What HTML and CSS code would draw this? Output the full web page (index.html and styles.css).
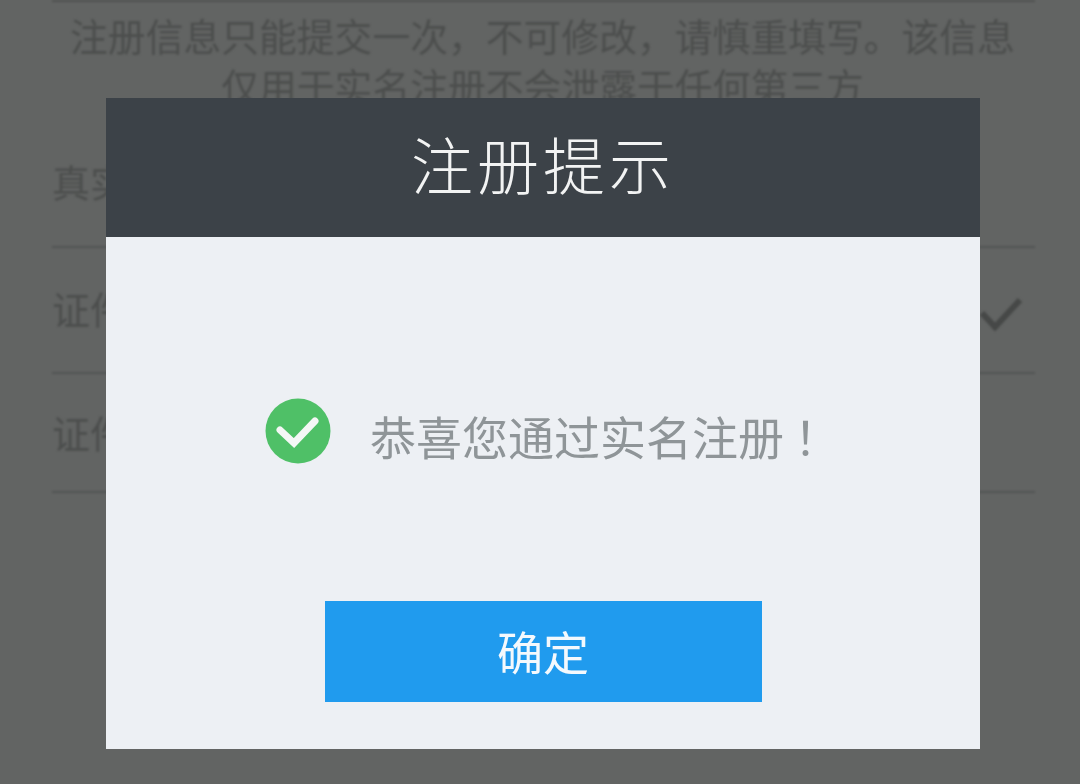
FILE: index.html
```html
<!DOCTYPE html>
<html lang="zh-CN">
<head>
    <meta charset="UTF-8">
    <title>注册提示</title>
    <link rel="stylesheet" href="styles.css">
</head>
<body>
    <section class="page">
        <p class="notice">注册信息只能提交一次，不可修改，请慎重填写。该信息仅用于实名注册不会泄露于任何第三方</p>
        <div class="row row-name"><span>真实姓名</span></div>
        <div class="row row-type">
            <span>证件类型</span>
            <svg class="row-check" viewBox="0 0 44 36" width="44" height="36">
                <path d="M3 17 L16 31 L41 4" fill="none" stroke="#464847" stroke-width="6"/>
            </svg>
        </div>
        <div class="row row-number"><span>证件号码</span></div>
    </section>

    <div class="overlay">
        <div class="modal">
            <h1 class="modal-title">注册提示</h1>
            <div class="modal-body">
                <div class="message">
                    <svg class="message-icon" viewBox="0 0 66 66" width="66" height="66">
                        <circle cx="33" cy="33" r="32.5" fill="#4fc067"/>
                        <path d="M15 32 L29 45 L50 23" fill="none" stroke="#f4f7f5" stroke-width="7" stroke-linecap="round"/>
                    </svg>
                    <span class="message-text">恭喜您通过实名注册<span class="message-mark">！</span></span>
                </div>
                <button class="confirm" type="button">确定</button>
            </div>
        </div>
    </div>
</body>
</html>
```

FILE: styles.css
```css
/* General Styles */
html, body {
    height: 100%;
}

body {
    background: #626463;
    color: #4c4e4d;
    font-family: "Noto Sans CJK SC", "Liberation Sans", sans-serif;
    margin: 0;
    overflow: hidden;
    position: relative;
}

/* Page behind the dialog */
.page {
    border-top: 2px solid #505251;
    filter: blur(1px);
    margin: 0 45px 0 52px;
}

.notice {
    font-size: 37.8px;
    line-height: 50px;
    margin: 8px 0 0;
    padding: 0 15px 0 13px;
    text-align: center;
}

.row {
    align-items: center;
    border-bottom: 2px solid #535554;
    box-sizing: border-box;
    display: flex;
    font-size: 38px;
    justify-content: space-between;
}

.row-name {
    height: 138px;
    padding-top: 4px;
}

.row-type {
    height: 126px;
    padding-bottom: 6px;
}

.row-number {
    height: 119px;
    padding-bottom: 2px;
}

.row-check {
    margin: 14px 12px 0 0;
}

/* Dialog */
.overlay {
    filter: blur(0.5px);
    left: 106px;
    position: absolute;
    top: 98px;
}

.modal {
    background: #edf0f4;
    display: flex;
    flex-direction: column;
    height: 651px;
    width: 874px;
}

.modal-title {
    align-items: center;
    background: #3c4248;
    box-sizing: border-box;
    color: #f2f3f3;
    display: flex;
    font-size: 62px;
    font-weight: 300;
    height: 139px;
    justify-content: center;
    letter-spacing: 4px;
    margin: 0;
    padding-bottom: 10px;
}

.modal-body {
    align-items: center;
    display: flex;
    flex: 1;
    flex-direction: column;
}

.message {
    align-items: center;
    align-self: flex-start;
    color: #8f9598;
    display: flex;
    font-size: 46px;
    gap: 39px;
    height: 66px;
    margin: 161px 0 0 159px;
}

.message-text {
    margin-top: 8px;
    white-space: nowrap;
}

.message-mark {
    margin-left: 10px;
}

.confirm {
    background: #209bee;
    border: none;
    color: #f4f9fd;
    font-family: inherit;
    font-size: 46px;
    height: 101px;
    margin-top: 137px;
    padding: 0 0 4px;
    width: 437px;
}
```
